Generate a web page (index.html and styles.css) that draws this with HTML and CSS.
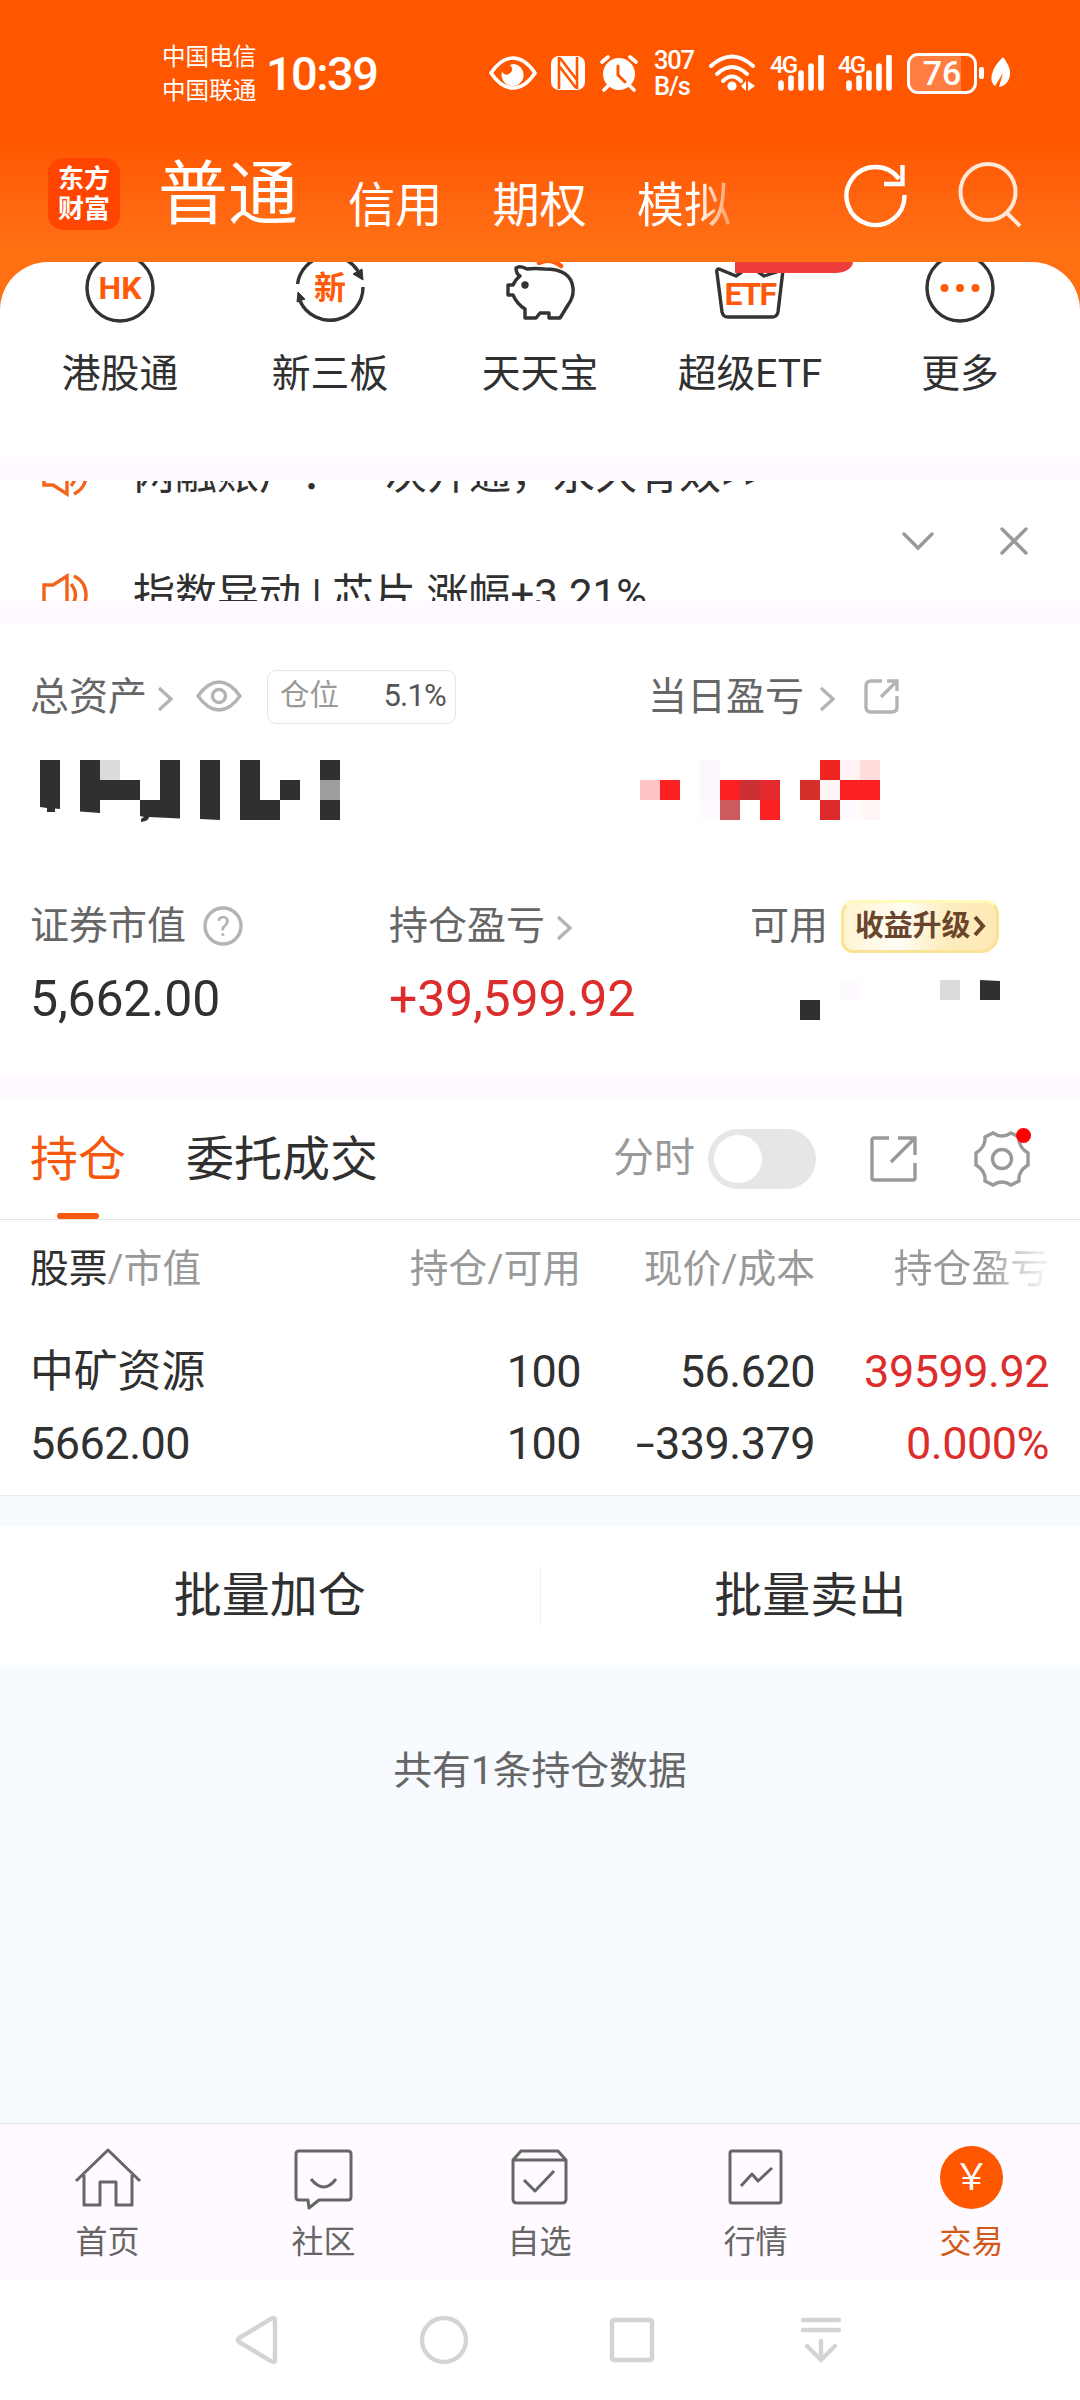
FILE: index.html
```html
<!DOCTYPE html>
<html lang="zh-CN">
<head>
<meta charset="utf-8">
<title>交易</title>
<link rel="stylesheet" href="styles.css">
</head>
<body>
<header class="top">
  <div class="status">
    <div class="carriers"><span>中国电信</span><span>中国联通</span></div>
    <div class="clock">10:39</div>
    <div class="status-icons">
      <svg class="s-eye" width="48" height="40" viewBox="0 0 48 40"><path d="M2 20Q12 5 24 5Q36 5 46 20Q36 35 24 35Q12 35 2 20Z" fill="none" stroke="#fff" stroke-width="3.6" stroke-linejoin="round"/><path d="M24 11a11 11 0 1 1-11 8q3 4 7 2q6-4 1-9z" fill="#fff"/></svg>
      <svg class="s-nfc" width="34" height="40" viewBox="0 0 34 40"><rect y="3" width="34" height="34" rx="8" fill="#fff"/><path d="M8 4V36M26 4V36M9 5L26 27M9 14L25 35" stroke="#ff5700" stroke-width="2.6" fill="none"/></svg>
      <svg class="s-alarm" width="38" height="40" viewBox="0 0 38 40"><circle cx="19" cy="21" r="16" fill="#fff"/><path d="M2 9L8 4M36 9L30 4M8 33L4 37M30 33L34 37" stroke="#fff" stroke-width="3.6" stroke-linecap="round"/><path d="M18 13V22L25 29" stroke="#ff5700" stroke-width="3" fill="none" stroke-linecap="round"/></svg>
      <div class="speed"><span>307</span><span>B/s</span></div>
      <svg class="s-wifi" width="48" height="40" viewBox="0 0 48 40"><g fill="none" stroke="#fff" stroke-width="4" stroke-linecap="round"><path d="M3 13Q24-6 45 13"/><path d="M9 21Q24 7 39 21"/><path d="M15 28Q24 19 33 28"/></g><circle cx="24" cy="33" r="4.6" fill="#fff"/><path d="M33 33l5-5v10zM40 28l7 5-7 5z" fill="#fff"/></svg>
      <div class="signal"><span>4G</span><svg width="46" height="36" viewBox="0 0 46 36"><path d="M3 28V33M13 23V33M23 18V33M33 11V33M43 2V33" stroke="#fff" stroke-width="5.6" stroke-linecap="round"/></svg></div>
      <div class="signal"><span>4G</span><svg width="46" height="36" viewBox="0 0 46 36"><path d="M3 28V33M13 23V33M23 18V33M33 11V33M43 2V33" stroke="#fff" stroke-width="5.6" stroke-linecap="round"/></svg></div>
      <div class="battery">76</div>
      <div class="battery-tip"></div>
      <svg class="s-leaf" width="22" height="34" viewBox="0 0 22 34"><path d="M13 1Q24 15 18 25Q15 30 9 31L13 17L5 30Q-1 25 3 15Q5 9 13 1Z" fill="#fff"/></svg>
    </div>
  </div>
  <div class="nav">
    <div class="logo"><span>东方</span><span>财富</span></div>
    <div class="nav-tabs">
      <span class="nav-tab current">普通</span>
      <span class="nav-tab">信用</span>
      <span class="nav-tab">期权</span>
      <span class="nav-tab fading">模拟</span>
    </div>
    <svg class="refresh" width="66" height="66" viewBox="0 0 66 66" fill="none" stroke="#fff" stroke-width="4.4"><path d="M56 17A29 29 0 1 0 61.5 33"/><path d="M59.500 3V22H41"/></svg>
    <svg class="search" width="66" height="66" viewBox="0 0 66 66" fill="none" stroke="#ffe8d8" stroke-width="4"><ellipse cx="31" cy="30" rx="27.500" ry="28"/><path d="M49 50L63 64"/></svg>
  </div>
</header>

<section class="sheet">
  <div class="shortcuts">
    <div class="shortcut">
      <svg width="80" height="64" viewBox="0 0 80 64"><circle cx="40" cy="26" r="33" fill="none" stroke="#333" stroke-width="3.4"/><text class="ico-hk" x="40" y="37" text-anchor="middle">HK</text></svg>
      <span>港股通</span>
    </div>
    <div class="shortcut">
      <svg width="80" height="64" viewBox="0 0 80 64"><path d="M7.500 22A33 33 0 0 1 68 9M73 25A33 33 0 0 1 10 39" fill="none" stroke="#333" stroke-width="3.400"/><path d="M63 12L73 18L72 7ZM7 40L15 37L8 30Z" fill="#333" stroke="#333"/><text class="ico-new" x="40" y="37" text-anchor="middle">新</text></svg>
      <span>新三板</span>
    </div>
    <div class="shortcut">
      <svg width="80" height="64" viewBox="0 0 80 64"><g fill="none" stroke="#333" stroke-width="3.400" stroke-linejoin="round"><path d="M27 7Q20 3 16 6Q16 12 20 14Q15 18 13 23H8V33H13Q17 42 25 47V56H36L40 51H49V56H60L68 43Q74 35 73 26Q71 7 45 7Q34 6 27 7Z"/></g><circle cx="25" cy="23" r="3.700" fill="#333"/><path d="M39 1Q50-5 61 4" fill="none" stroke="#ff5a0a" stroke-width="4.500" stroke-linecap="round"/></svg>
      <span>天天宝</span>
    </div>
    <div class="shortcut">
      <svg width="80" height="64" viewBox="0 0 80 64"><path d="M26 14L9 7Q6 7 7 11L12 50Q13 55 18 55H62Q67 55 68 50L73 8L54 14L40 4Z" fill="none" stroke="#333" stroke-width="3.400" stroke-linejoin="round"/><text class="ico-etf" x="40" y="43" text-anchor="middle">ETF</text></svg>
      <i class="hot"></i>
      <span>超级ETF</span>
    </div>
    <div class="shortcut">
      <svg width="80" height="64" viewBox="0 0 80 64"><circle cx="40" cy="26" r="33" fill="none" stroke="#333" stroke-width="3.400"/><g fill="#ff5a0a"><circle cx="24.500" cy="26" r="4"/><circle cx="40" cy="26" r="4"/><circle cx="55.500" cy="26" r="4"/></g></svg>
      <span>更多</span>
    </div>
  </div>
</section>

<section class="notice">
  <div class="notice-list">
    <div class="notice-line">
      <svg width="50" height="44" viewBox="0 0 50 44" fill="none" stroke="#f2641b" stroke-width="3.400"><path d="M3 12H12L26 3V41L12 32H3ZM30 11Q39 22 30 33M33 3Q45 9 45 22Q45 35 33 41"/></svg>
      <span>两融账户：一次开通，永久有效&gt;&gt;</span>
    </div>
    <div class="notice-line">
      <svg width="50" height="44" viewBox="0 0 50 44" fill="none" stroke="#f2641b" stroke-width="3.400"><path d="M3 12H12L26 3V41L12 32H3ZM30 11Q39 22 30 33M33 3Q45 9 45 22Q45 35 33 41"/></svg>
      <span>指数异动 | 芯片 涨幅+3.21%</span>
    </div>
  </div>
  <div class="notice-tools">
    <svg width="32" height="32" viewBox="0 0 32 32"><path d="M2 9L16 23L30 9"/></svg>
    <svg width="32" height="32" viewBox="0 0 32 32"><path d="M4 4L28 28M28 4L4 28"/></svg>
  </div>
</section>

<section class="assets">
  <div class="row-main">
    <div class="label">总资产
      <svg class="chev" width="16" height="26" viewBox="0 0 16 26"><path d="M2 2L14 13L2 24"/></svg>
      <svg class="eye" width="46" height="32" viewBox="0 0 46 32"><path d="M2 16Q12 2 23 2Q34 2 44 16Q34 30 23 30Q12 30 2 16Z"/><circle cx="23" cy="16" r="6.500"/></svg>
      <div class="ratio"><span>仓位</span><b>5.1%</b></div>
    </div>
    <div class="label day">当日盈亏
      <svg class="chev" width="16" height="26" viewBox="0 0 16 26"><path d="M2 2L14 13L2 24"/></svg>
      <svg class="share" width="36" height="36" viewBox="0 0 36 36"><path d="M18 2H7Q2 2 2 7V28Q2 33 7 33H28Q33 33 33 28V17M23 2H33V12M33 2L17 18"/></svg>
    </div>
    <svg class="mosaic" width="320" height="64" viewBox="0 0 320 64">
      <path fill="#303030" d="M9 0H29V49L24 48.500V52H16V48L9 47ZM49 0H69V20H109V40H69V53L49 51.500ZM129 0H149V58.500L118 57Q118 61 110 62V59L113 57L109 56V40H129ZM169 0H189V60L169 59ZM209 0H229V40H249V60H209ZM249 20H269V40H249ZM289 0H309V20H289ZM289 40H309V60H289Z"/>
      <rect x="69" width="20" height="20" fill="#dddadd"/><rect x="289" y="20" width="20" height="20" fill="#9c9d9c"/>
    </svg>
    <svg class="mosaic" width="260" height="64" viewBox="0 0 260 64">
      <rect y="20" width="20" height="20" fill="#ffc4c4"/>
      <path fill="#fb2122" d="M20 20H40V40H20ZM80 20H100V40H80ZM120 40H140V60H120ZM200 20H240V40H200Z"/>
      <rect x="60" width="20" height="40" fill="#fdf6ff"/><rect x="60" y="40" width="20" height="20" fill="#fefaff"/>
      <rect x="80" y="40" width="20" height="20" fill="#cd5b5d"/><rect x="100" y="20" width="20" height="20" fill="#cc3033"/><rect x="120" y="20" width="20" height="20" fill="#e6292c"/>
      <rect x="160" y="20" width="20" height="20" fill="#d43029"/><rect x="180" width="20" height="20" fill="#f02520"/><rect x="180" y="20" width="20" height="20" fill="#fff5f5"/><rect x="180" y="40" width="20" height="20" fill="#dd2b29"/>
      <rect x="200" width="20" height="20" fill="#fff2f5"/><rect x="200" y="40" width="20" height="20" fill="#fefaff"/><rect x="220" width="20" height="20" fill="#ffdddd"/><rect x="220" y="40" width="20" height="20" fill="#fff6f6"/>
    </svg>
  </div>
  <div class="row-sub">
    <div class="label">证券市值
      <svg class="help" width="40" height="40" viewBox="0 0 40 40"><circle cx="20" cy="20" r="18"/><text x="20" y="30" text-anchor="middle">?</text></svg>
    </div>
    <div class="label">持仓盈亏
      <svg class="chev" width="16" height="26" viewBox="0 0 16 26"><path d="M2 2L14 13L2 24"/></svg>
    </div>
    <div class="label">可用
      <div class="upgrade">收益升级<svg width="13" height="22" viewBox="0 0 13 22"><path d="M2 2L10 11L2 20" fill="none" stroke="#6b452b" stroke-width="4"/></svg></div>
    </div>
    <div class="value">5,662.00</div>
    <div class="value up">+39,599.92</div>
    <svg class="mosaic-cash" width="200" height="40" viewBox="0 0 200 40"><path fill="#303030" d="M0 20H20V40H0ZM180 0L200 1V20H180Z"/><rect x="40" width="20" height="20" fill="#fffaff"/><rect x="140" width="20" height="20" fill="#dddadd"/></svg>
  </div>
</section>

<section class="holdings">
  <div class="tabs">
    <span class="tab active">持仓</span>
    <span class="tab">委托成交</span>
    <span class="minute">分时</span>
    <i class="toggle"></i>
    <svg class="t-share" width="48" height="48" viewBox="0 0 48 48"><path d="M19 3H4Q2 3 2 5V43Q2 45 4 45H43Q45 45 45 43V28M28 3H45V20M45 3L21 27"/></svg>
    <div class="gear"><svg width="58" height="58" viewBox="0 0 58 58"><path d="M20 3Q29 9 38 3L46 7Q45 17 55 23V35Q45 41 46 51L38 55Q29 49 20 55L12 51Q13 41 3 35V23Q13 17 12 7Z"/><circle cx="29" cy="29" r="9.500"/></svg></div>
  </div>
  <div class="grid head">
    <div><em>股票</em>/市值</div><div>持仓/可用</div><div>现价/成本</div><div class="fade">持仓盈亏</div>
  </div>
  <div class="grid body">
    <div class="name">中矿资源</div><div>100</div><div>56.620</div><div class="up">39599.92</div>
    <div>5662.00</div><div>100</div><div><span class="minus">-</span>339.379</div><div class="up">0.000%</div>
  </div>
</section>

<section class="batch"><div>批量加仓</div><i></i><div>批量卖出</div></section>
<div class="summary">共有1条持仓数据</div>

<nav class="tabbar">
  <div><svg width="72" height="66" viewBox="0 0 72 66"><path d="M4 36L36 5L68 36M12 30V60H28V37H44V60H60V30"/></svg>首页</div>
  <div><svg width="72" height="66" viewBox="0 0 72 66"><path d="M11 6H60Q63 6 63 9V52Q63 55 60 55H31L21 63L20 55H11Q8 55 8 52V9Q8 6 11 6ZM23 34Q36 50 48 34"/></svg>社区</div>
  <div><svg width="72" height="66" viewBox="0 0 72 66"><path d="M9 15L17 6H54L62 15V54Q62 58 58 58H13Q9 58 9 54ZM9 15H62M20 35L31 46L50 26"/></svg>自选</div>
  <div><svg width="72" height="66" viewBox="0 0 72 66"><rect x="10" y="6" width="51" height="52" rx="2"/><path d="M21 41L32 29L38 36L52 23"/></svg>行情</div>
  <div class="on"><i class="yuan">￥</i>交易</div>
</nav>

<nav class="system">
  <svg width="56" height="56" viewBox="0 0 56 56"><path d="M47 7V49Q46 51 43 49L11 30Q9 28 11 26L43 7Q46 5 47 7Z"/></svg>
  <svg width="56" height="56" viewBox="0 0 56 56"><circle cx="28" cy="28" r="22"/></svg>
  <svg width="56" height="56" viewBox="0 0 56 56"><rect x="8" y="8" width="40" height="40" rx="2"/></svg>
  <svg width="56" height="56" viewBox="0 0 56 56"><path d="M11 8H47M11 18H47M29 29V47M15 34L29 48L43 34" stroke-linecap="round"/></svg>
</nav>
</body>
</html>
```
FILE: styles.css
```css
* { box-sizing: border-box; }
body {
  margin: 0;
  width: 1080px;
  height: 2400px;
  overflow: hidden;
  background: #fff;
  color: #303030;
  font-family: Roboto, "Noto Sans CJK SC", sans-serif;
  font-size: 39px;
  line-height: 1.2;
}
svg { display: block; flex: none; overflow: hidden; }
i, em { font-style: normal; }

/* header */
.top {
  height: 310px;
  background: linear-gradient(#ff5700 0, #ff5700 140px, #ff6510 200px, #ff7013 250px);
  color: #fff;
}
.status { display: flex; height: 140px; padding: 40px 0 0 162px; }
.carriers { display: flex; flex-direction: column; width: 104px; font-size: 23.6px; line-height: 34px; }
.clock { width: 223px; font-size: 47px; font-weight: 500; line-height: 67px; letter-spacing: -1.6px; }
.status-icons { display: flex; align-items: center; height: 66px; }
.s-nfc { margin-left: 14px; }
.s-alarm { margin-left: 15px; }
.speed { display: flex; flex-direction: column; width: 40px; margin-left: 16px; font-size: 25.500px; font-weight: 500; line-height: 26px; letter-spacing: -1.2px; }
.s-wifi { margin-left: 14px; }
.signal { position: relative; width: 54px; height: 36px; margin-left: 14px; padding-left: 8px; }
.signal span { position: absolute; left: 0; top: -3px; font-size: 24px; font-weight: 500; line-height: 26px; letter-spacing: -1.800px; }
.battery {
  width: 70px; height: 41px; margin-left: 15px;
  border: 3px solid #fff; border-radius: 11px;
  background: linear-gradient(90deg, #ff7d40 51px, transparent 51px);
  font-size: 34px; font-weight: 500; line-height: 35px; text-align: center;
}
.battery-tip { width: 5px; height: 12px; margin: 0 6px 0 2px; border-radius: 2px; background: #fff; }
.nav { display: flex; padding-left: 48px; height: 122px; }
.logo {
  display: flex; flex-direction: column; align-items: center; justify-content: center;
  width: 72px; height: 72px; margin-top: 18px; border-radius: 15px; background: #ff4500;
  font-size: 26px; font-weight: 700; line-height: 30px;
}
.nav-tabs { display: flex; width: 723px; padding-left: 38px; }
.nav-tab { margin-right: 50px; padding-top: 36px; font-size: 47.200px; line-height: 60px; height: 110px; }
.nav-tab.current { padding-top: 12px; font-size: 70px; line-height: 86px; margin-right: 50px; }
.fading { background: linear-gradient(90deg, #fff 60px, #ff9a5c 95px); -webkit-background-clip: text; background-clip: text; color: transparent; }
.refresh { margin-top: 22px; }
.search { margin: 22px 0 0 48px; }

/* shortcuts */
.sheet { height: 195px; margin-top: -48px; border-radius: 48px 48px 0 0; background: #fff; overflow: hidden; }
.shortcuts { display: grid; grid-template-columns: repeat(5, 210px); padding: 0 15px; }
.shortcut { position: relative; display: flex; flex-direction: column; align-items: center; }
.shortcut span { margin-top: 23px; line-height: 50px; font-size: 38.800px; }
.shortcut text { fill: #ff5a0a; font-weight: 700; }
.ico-hk { font-size: 32px; }
.ico-new { font-size: 32px; }
.ico-etf { font-size: 32px; letter-spacing: -1.5px; }
.hot { position: absolute; left: 90px; top: 0; width: 118px; height: 11px; border-radius: 0 0 18px 0 / 0 0 11px 0; background: #f03c3a; }

/* notice */
.notice { display: flex; height: 168px; border: solid #fefaff; border-width: 24px 0; overflow: hidden; }
.notice-list { width: 902px; height: 120px; padding-left: 41px; overflow: hidden; }
.notice-line { display: flex; align-items: center; height: 120px; margin-top: -66px; font-size: 42px; white-space: pre; }
.notice-line + .notice-line { margin-top: 0; }
.notice-line span { margin-left: 42px; line-height: 60px; }
.notice-tools { display: flex; align-items: center; gap: 64px; }
.notice-tools path { fill: none; stroke: #999; stroke-width: 3.400; stroke-linecap: round; }

/* assets */
.assets { height: 450px; padding: 44px 0 0 31px; }
.row-main { display: grid; grid-template-columns: 609px 1fr; grid-template-rows: 56px 64px; row-gap: 35px; }
.label { display: flex; align-items: center; margin-left: -1px; color: #666; white-space: nowrap; }
.day { padding-left: 9px; }
.label > svg { fill: none; stroke: #b5b3b5; stroke-width: 3.400; }
.label .chev { margin-left: 10px; margin-top: 3px; }
.day .chev { margin-left: 15px; }
.label .eye { margin-left: 23px; margin-top: -2px; }
.share { margin-left: 29px; }
.ratio {
  display: flex; align-items: center; justify-content: space-between;
  width: 189px; height: 54px; margin-left: 25px; padding: 0 9px 2px 12px;
  border: 1.500px solid #e6e4e6; border-radius: 9px; color: #999; font-size: 29.500px;
}
.ratio b { color: #555; font-weight: 400; font-size: 31px; letter-spacing: -.8px; }
.row-sub { display: grid; grid-template-columns: 359px 361px 1fr; grid-template-rows: 52px 56px; row-gap: 19px; margin-top: 76px; }
.help { margin-left: 17px; }
.help text { font-size: 28px; fill: #b0aeb0; stroke: none; }
.row-sub .chev { margin-left: 11px; }
.value { margin-left: -1px; font-size: 50px; line-height: 56px; letter-spacing: -.2px; }
.up { color: #dc2d2d; }
.upgrade {
  display: flex; align-items: center; gap: 3px; width: 158px; height: 53px; margin-left: 13px; padding-left: 11px;
  border: 3px solid #fbe396; border-top-color: #fffab5; border-radius: 14px 14px 18px 12px;
  background: linear-gradient(100deg, #fff3cf 0, #fffdf6 38%, #fdedc0 65%, #fde9b4);
  color: #6b452b; font-size: 29px; font-weight: 700; letter-spacing: -.2px;
}
.mosaic-cash { margin: 9px 0 0 49px; }

/* holdings */
.holdings { height: 421px; border-top: 24px solid #fefaff; border-bottom: 1px solid #e9ebee; }
.tabs { display: flex; align-items: center; height: 121px; padding-left: 30px; border-bottom: 1px solid #e3e3e3; }
.tab { position: relative; margin-right: 60px; font-size: 48px; line-height: 122px; height: 120px; }
.tab.active { color: #f4590f; }
.tab.active::after { content: ""; position: absolute; left: 27px; bottom: 0; width: 42px; height: 6px; border-radius: 3px; background: #f4590f; }
.minute { width: 95px; margin-left: 175px; color: #999; font-size: 41px; }
.toggle { width: 108px; height: 60px; padding: 6px; border-radius: 30px; background: #e6e6e6; }
.toggle::before { content: ""; display: block; width: 48px; height: 48px; border-radius: 24px; background: #fff; }
.t-share { margin-left: 54px; }
.tabs svg { fill: none; stroke: #999; stroke-width: 3.400; }
.gear { position: relative; margin-left: 55px; }
.gear::after { content: ""; position: absolute; left: 43px; top: -2px; width: 15px; height: 15px; border-radius: 50%; background: #f00; }
.grid { display: grid; grid-template-columns: 301px 250px 234px 234px; padding-left: 30px; text-align: right; }
.grid > :nth-child(4n+1) { text-align: left; }
.head { height: 98px; line-height: 98px; color: #999; font-size: 38.800px; }
.head em { color: #303030; }
.fade { background: linear-gradient(90deg, #999 170px, #eee 225px); -webkit-background-clip: text; background-clip: text; color: transparent; }
.body { padding-top: 18px; grid-auto-rows: 72px; line-height: 72px; font-size: 45px; letter-spacing: -.5px; }
.body .name { font-size: 43.800px; letter-spacing: 0; }
.minus { display: inline-block; margin-right: 4px; transform: scaleX(1.5); }

/* batch actions */
.batch { display: flex; align-items: center; height: 169px; border-top: 30px solid #f7faff; font-size: 48px; text-align: center; }
.batch div { flex: 1; position: relative; }
.batch i { width: 1px; height: 60px; background: #eee; }
.summary { height: 458px; padding-top: 76px; background: #f7faff; color: #666; font-size: 38.800px; line-height: 60px; text-align: center; }

/* bottom bars */
.tabbar { display: grid; grid-template-columns: repeat(5, 1fr); height: 157px; padding-top: 21px; border-top: 1px solid #dfe1e4; background: #fefaff; color: #666; font-size: 32px; line-height: 40px; text-align: center; }
.tabbar div { display: flex; flex-direction: column; align-items: center; gap: 11px; margin-left: -1px; }
.tabbar svg { fill: none; stroke: #666; stroke-width: 3; stroke-linejoin: round; }
.tabbar .on { color: #d2591a; }
.yuan { width: 63px; height: 63px; margin: 1px 0 2px; border-radius: 50%; background: #ff5700; color: #fff; font-size: 36px; line-height: 65px; }
.system { display: flex; gap: 132px; height: 120px; padding: 32px 0 0 228px; }
.system svg { fill: none; stroke: #d6d3d6; stroke-width: 4.400; }
```
